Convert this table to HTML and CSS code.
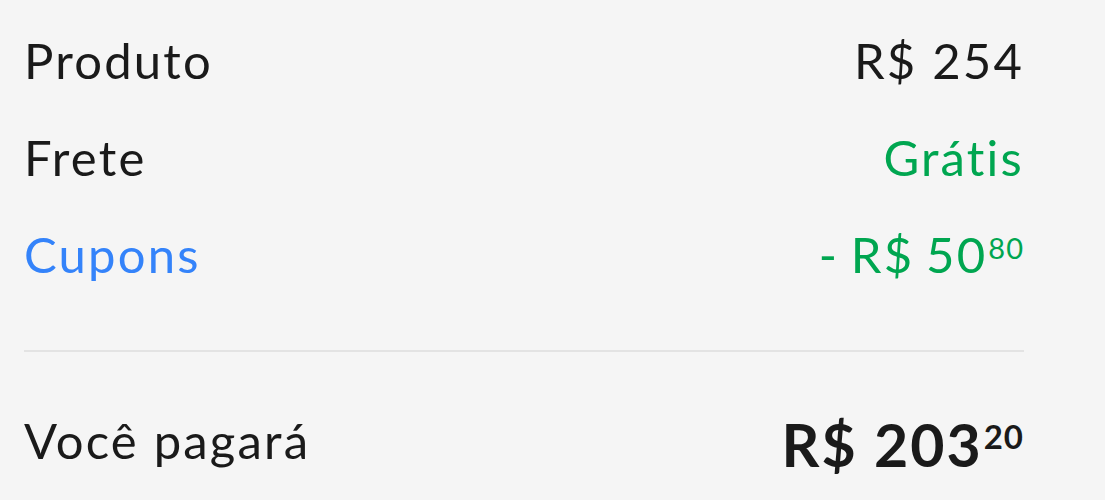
FILE: index.html
```html
<!DOCTYPE html>
<html>

<head>
	<title>Resumo da compra</title>
	<link rel="stylesheet" href="styles.css">
</head>

<body>
	<div class="summary">
		<div class="row">
			<span>Produto</span>
			<span>R$ 254</span>
		</div>
		<div class="row">
			<span>Frete</span>
			<span class="free">Grátis</span>
		</div>
		<div class="row">
			<a class="coupons" href="#">Cupons</a>
			<span class="discount">- R$ 50<sup>80</sup></span>
		</div>

		<hr class="divider">

		<div class="row total">
			<span>Você pagará</span>
			<span class="price">R$ 203<sup>20</sup></span>
		</div>
	</div>
</body>

</html>
```

FILE: styles.css
```css
body {
	font-family: Lato, "Open Sans", Arial, sans-serif;
	background-color: #f5f5f5;
	color: #1a1a1a;
	margin: 0;
	padding: 0;
}

.summary {
	width: 1000px;
	padding: 12px 0 0 24px;
}

.row {
	display: flex;
	justify-content: space-between;
	align-items: flex-start;
	font-size: 49px;
	line-height: 97px;
	letter-spacing: 2.2px;
}

.coupons {
	color: #3483fa;
	text-decoration: none;
}

.free,
.discount {
	color: #00a650;
}

.discount {
	word-spacing: -3px;
}

sup {
	font-size: 29px;
	line-height: 0;
	letter-spacing: 1px;
	vertical-align: baseline;
	position: relative;
	top: -0.5em;
	margin-left: 1px;
}

.divider {
	border: none;
	height: 2px;
	background-color: #e3e3e3;
	margin: 47px 0 40px 0;
}

.price {
	font-size: 59px;
	font-weight: bold;
	letter-spacing: 2px;
	padding-top: 4px;
}

.price sup {
	font-size: 33px;
	top: -0.55em;
}
```
